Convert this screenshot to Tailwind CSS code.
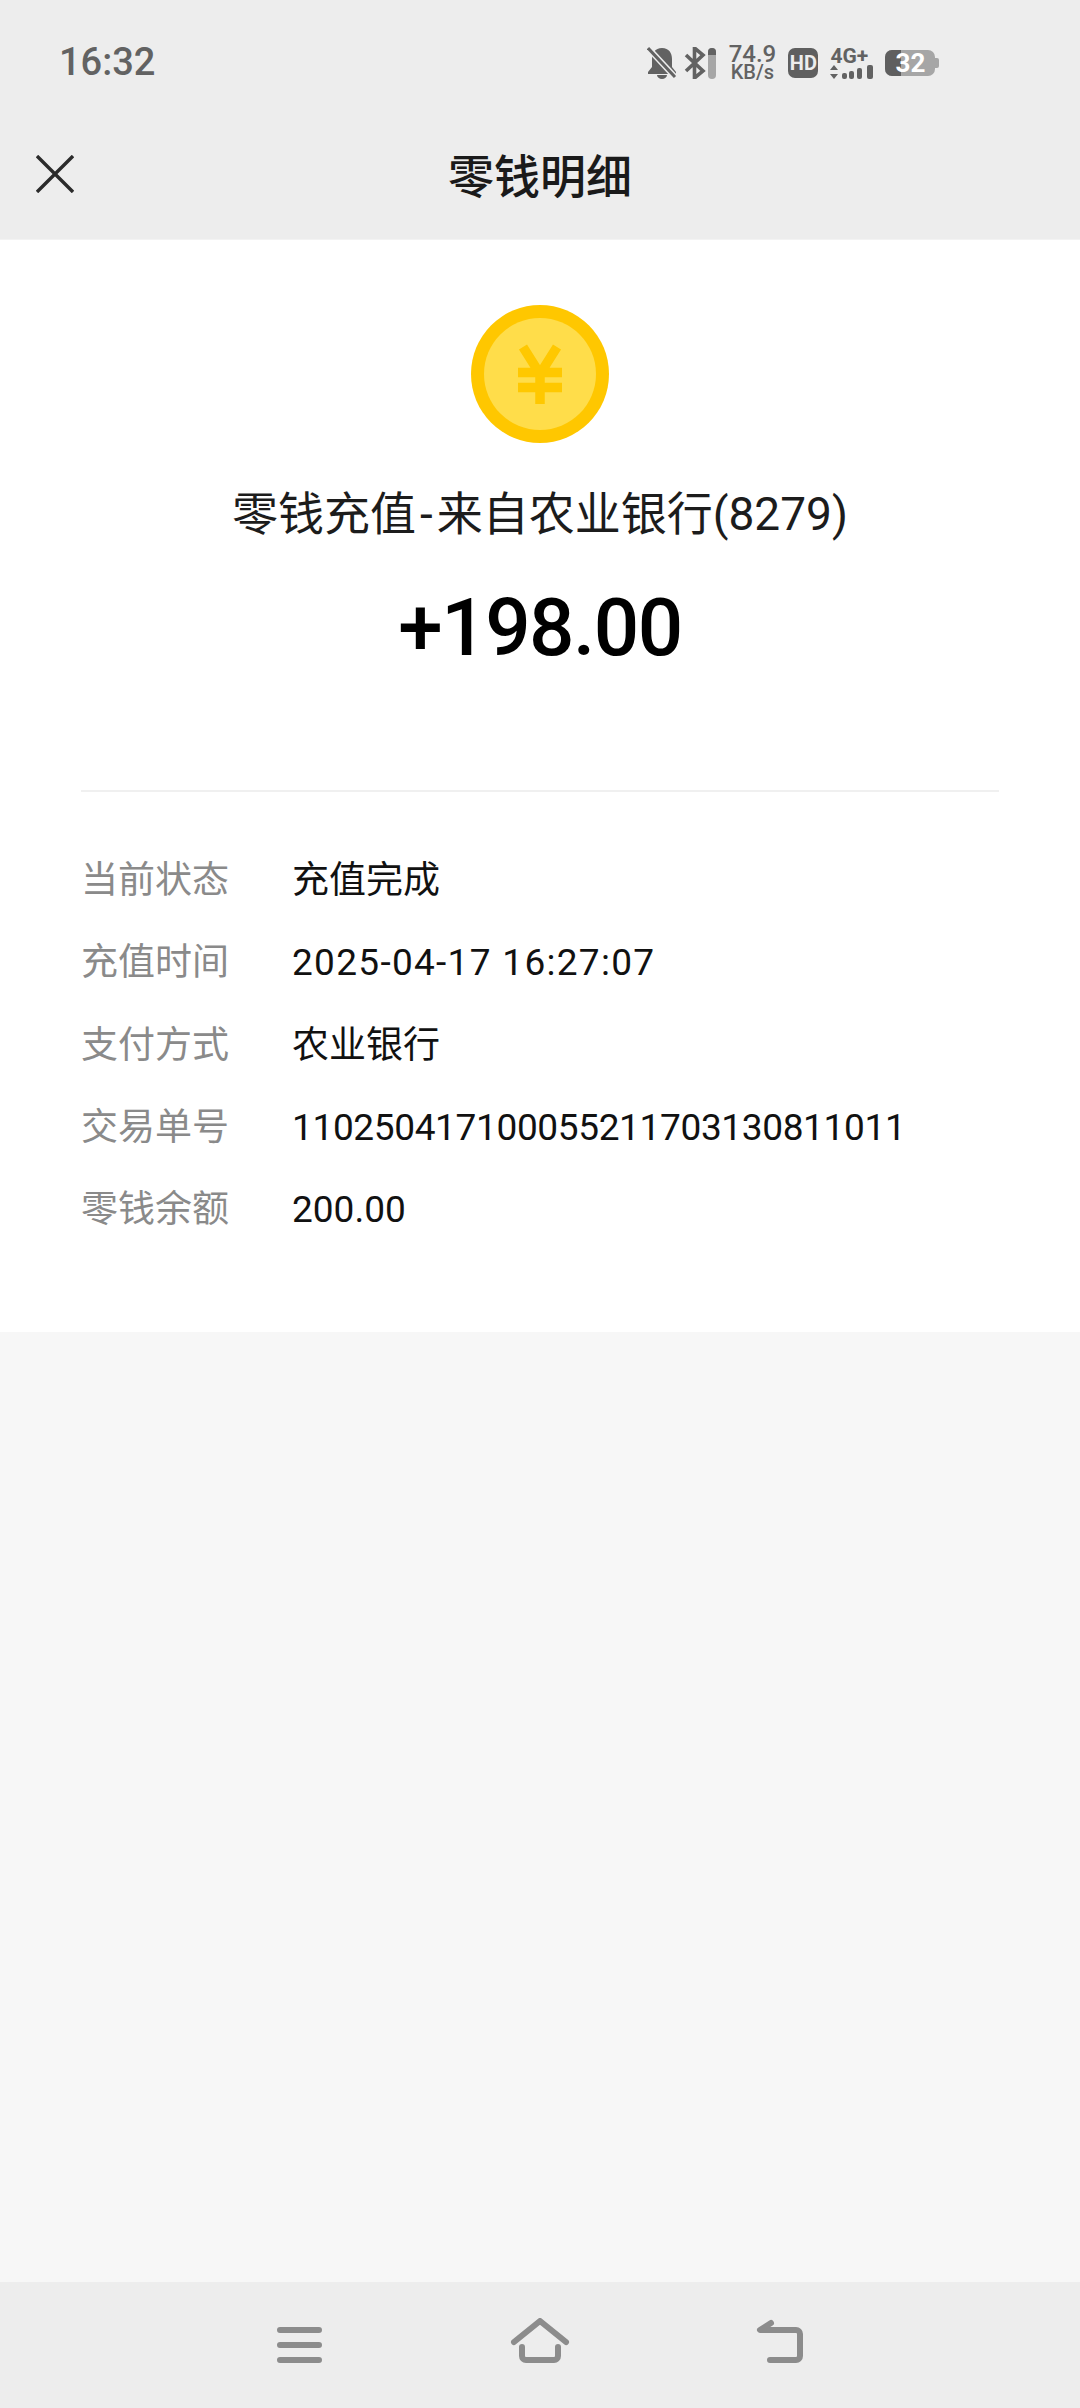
<!DOCTYPE html>
<html lang="zh-CN">
<head>
<meta charset="UTF-8">
<meta name="viewport" content="width=device-width, initial-scale=1.0">
<title>零钱明细</title>
<script src="https://cdn.jsdelivr.net/npm/@tailwindcss/browser@4"></script>
</head>
<body class="w-[1080px] h-[2408px] overflow-hidden flex flex-col bg-[#f7f7f7] font-['Roboto','Noto_Sans_CJK_SC',sans-serif]">

  <!-- status bar -->
  <div class="h-[120px] bg-[#ededed] flex pl-[59px] pt-[40px] text-[#626262]">
    <span class="text-[38px] leading-[44px] font-medium">16:32</span>
    <div class="ml-[492px] mt-[6px] h-[34px] flex items-center">
      <svg class="w-[30px] h-[32px]" viewBox="0 0 30 32">
        <path d="M15 1C8 1 5 6 5 12v8l-4 5v2h28v-2l-4-5v-8C25 6 22 1 15 1z M10 28a5 4 0 0 0 10 0z" fill="#626262"/>
        <path d="M2 2l26 28" stroke="#ededed" stroke-width="6"/>
        <path d="M1 1l27 29" stroke="#626262" stroke-width="3"/>
      </svg>
      <svg class="ml-[7px] w-[22px] h-[32px]" viewBox="0 0 22 32" fill="none" stroke="#626262" stroke-width="3.600">
        <path d="M2 8l17 16-8.500 7V1l8.500 7L2 24"/>
      </svg>
      <div class="ml-[2px] w-[8px] h-[31px] rounded-full bg-[#a6a6a6] overflow-hidden"><div class="h-[7px] bg-[#626262]"></div></div>
      <div class="ml-[13px] w-[46px] flex flex-col items-center font-medium">
        <div class="text-[24px] leading-[19px]">74.9</div>
        <div class="text-[20px] leading-[17px]">KB/s</div>
      </div>
      <div class="ml-[13px] w-[30px] h-[30px] rounded-[7px] bg-[#5f5f5f] text-[#ededed] text-[20px] leading-[30px] font-bold text-center">HD</div>
      <div class="ml-[12px] w-[44px] flex flex-col">
        <div class="text-[21px] leading-[17px] font-bold">4G+</div>
        <svg class="w-[44px] h-[14px]" viewBox="0 0 44 14" fill="#626262">
          <path d="M4 0l4 5H0zM4 14l4-5H0z"/>
          <rect x="12" y="8" width="5" height="6" rx="2"/>
          <rect x="19" y="6" width="5" height="8" rx="2"/>
          <rect x="27" y="3" width="5" height="11" rx="2"/>
          <rect x="37" y="0" width="6" height="14" rx="2"/>
        </svg>
      </div>
      <div class="ml-[11px] relative w-[50px] h-[26px] rounded-[7px] bg-[#a6a6a6]">
        <div class="w-[16px] h-full rounded-l-[7px] bg-[#5f5f5f]"></div>
        <div class="absolute inset-0 text-center text-white text-[26px] leading-[26px] font-bold">32</div>
      </div>
      <div class="w-[4px] h-[10px] rounded-r-[2px] bg-[#a6a6a6]"></div>
    </div>
  </div>

  <!-- title bar -->
  <div class="h-[120px] pb-[6px] bg-[#ededed] border-b border-[#f3f3f3] grid grid-cols-[1fr_auto_1fr] items-center text-[#1a1a1a]">
    <svg class="ml-[36px] mb-[6px] w-[38px] h-[38px]" viewBox="0 0 38 38" fill="none" stroke="#2b2b2b" stroke-width="3.400">
      <path d="M1 1l36 36M37 1L1 37"/>
    </svg>
    <h1 class="text-[46px] leading-[56px] font-medium">零钱明细</h1>
    <div></div>
  </div>

  <!-- detail card -->
  <div class="h-[1092px] bg-white flex flex-col items-center pt-[65px]">
    <svg class="w-[138px] h-[138px]" viewBox="0 0 138 138">
      <circle cx="69" cy="69" r="69" fill="#ffc700"/>
      <circle cx="69" cy="69" r="56" fill="#ffdd4a"/>
      <path d="M52 42l17 27 17-27M47 67.500h44M47 82.500h44M69 67v32" fill="none" stroke="#ffc800" stroke-width="9.500"/>
    </svg>
    <p class="mt-[41px] text-[46px] leading-[60px] text-[#1c1c1c]">零钱充值<span class="mx-[4px]">-</span>来自农业银行(8279)</p>
    <p class="mt-[37px] text-[80px] leading-[94px] font-medium tracking-[-1.500px] text-black">+198.00</p>

    <div class="mt-[115px] w-[918px] border-t-2 border-[#f0f0f0] pt-[48px] text-[37px] leading-[82.300px]">
      <div class="flex"><span class="w-[211px] text-[#8a8a8a]">当前状态</span><span class="text-[#111]">充值完成</span></div>
      <div class="flex"><span class="w-[211px] text-[#8a8a8a]">充值时间</span><span class="text-[#111] tracking-[1.300px]">2025-04-17 16:27:07</span></div>
      <div class="flex"><span class="w-[211px] text-[#8a8a8a]">支付方式</span><span class="text-[#111]">农业银行</span></div>
      <div class="flex"><span class="w-[211px] text-[#8a8a8a]">交易单号</span><span class="text-[#111] tracking-[-0.350px]">110250417100055211703130811011</span></div>
      <div class="flex"><span class="w-[211px] text-[#8a8a8a]">零钱余额</span><span class="text-[#111]">200.00</span></div>
    </div>
  </div>

  <!-- gray filler -->
  <div class="flex-1"></div>

  <!-- nav bar -->
  <div class="h-[126px] bg-[#ededed] flex justify-center pt-[36px]">
    <svg class="w-[530px] h-[50px]" viewBox="275 2318 530 50" fill="none" stroke="#8c8c8c" stroke-width="6" stroke-linecap="round" stroke-linejoin="round">
      <path d="M280 2330h39M280 2345h39M280 2360h39"/>
      <path d="M514 2342l26-21 26 21"/>
      <path d="M522 2347v9a4 4 0 0 0 4 4h28a4 4 0 0 0 4-4v-9"/>
      <path d="M771 2323l-11 7h36a4 4 0 0 1 4 4v22a4 4 0 0 1-4 4h-26"/>
    </svg>
  </div>
</body>
</html>
